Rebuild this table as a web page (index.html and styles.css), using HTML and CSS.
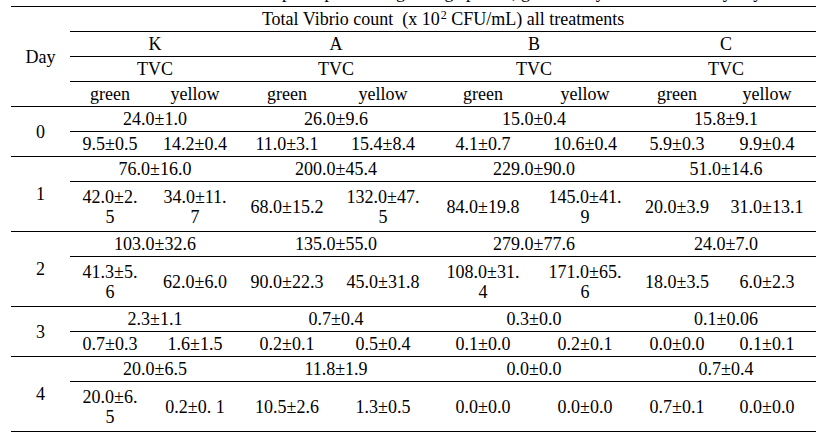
FILE: index.html
```html
<!DOCTYPE html>
<html lang="en">
<head>
<meta charset="utf-8">
<title>Total Vibrio count</title>
<link rel="stylesheet" href="styles.css">
</head>
<body>
<div class="caption"><p>Table 3. Vibrio count of shrimp samples during storage period, green and yellow colonies by day</p></div>
<table class="vt">
  <colgroup>
    <col class="c-day">
    <col class="c-kg"><col class="c-ky">
    <col class="c-ag"><col class="c-ay">
    <col class="c-bg"><col class="c-by">
    <col class="c-cg"><col class="c-cy">
  </colgroup>
  <thead>
    <tr>
      <th rowspan="4">Day</th>
      <th colspan="8">Total Vibrio count&nbsp; (x 10<sup>2</sup> CFU/mL) all treatments</th>
    </tr>
    <tr><th colspan="2">K</th><th colspan="2">A</th><th colspan="2">B</th><th colspan="2">C</th></tr>
    <tr><th colspan="2">TVC</th><th colspan="2">TVC</th><th colspan="2">TVC</th><th colspan="2">TVC</th></tr>
    <tr><th>green</th><th>yellow</th><th>green</th><th>yellow</th><th>green</th><th>yellow</th><th>green</th><th>yellow</th></tr>
  </thead>
  <tbody>
    <tr><td rowspan="2">0</td><td colspan="2">24.0±1.0</td><td colspan="2">26.0±9.6</td><td colspan="2">15.0±0.4</td><td colspan="2">15.8±9.1</td></tr>
    <tr><td>9.5±0.5</td><td>14.2±0.4</td><td>11.0±3.1</td><td>15.4±8.4</td><td>4.1±0.7</td><td>10.6±0.4</td><td>5.9±0.3</td><td>9.9±0.4</td></tr>
  </tbody>
  <tbody>
    <tr><td rowspan="2">1</td><td colspan="2">76.0±16.0</td><td colspan="2">200.0±45.4</td><td colspan="2">229.0±90.0</td><td colspan="2">51.0±14.6</td></tr>
    <tr class="tall"><td>42.0±2.<br>5</td><td>34.0±11.<br>7</td><td>68.0±15.2</td><td>132.0±47.<br>5</td><td>84.0±19.8</td><td>145.0±41.<br>9</td><td>20.0±3.9</td><td>31.0±13.1</td></tr>
  </tbody>
  <tbody>
    <tr><td rowspan="2">2</td><td colspan="2">103.0±32.6</td><td colspan="2">135.0±55.0</td><td colspan="2">279.0±77.6</td><td colspan="2">24.0±7.0</td></tr>
    <tr class="tall"><td>41.3±5.<br>6</td><td>62.0±6.0</td><td>90.0±22.3</td><td>45.0±31.8</td><td>108.0±31.<br>4</td><td>171.0±65.<br>6</td><td>18.0±3.5</td><td>6.0±2.3</td></tr>
  </tbody>
  <tbody>
    <tr><td rowspan="2">3</td><td colspan="2">2.3±1.1</td><td colspan="2">0.7±0.4</td><td colspan="2">0.3±0.0</td><td colspan="2">0.1±0.06</td></tr>
    <tr><td>0.7±0.3</td><td>1.6±1.5</td><td>0.2±0.1</td><td>0.5±0.4</td><td>0.1±0.0</td><td>0.2±0.1</td><td>0.0±0.0</td><td>0.1±0.1</td></tr>
  </tbody>
  <tbody>
    <tr><td rowspan="2">4</td><td colspan="2">20.0±6.5</td><td colspan="2">11.8±1.9</td><td colspan="2">0.0±0.0</td><td colspan="2">0.7±0.4</td></tr>
    <tr class="tall"><td>20.0±6.<br>5</td><td>0.2±0. 1</td><td>10.5±2.6</td><td>1.3±0.5</td><td>0.0±0.0</td><td>0.0±0.0</td><td>0.7±0.1</td><td>0.0±0.0</td></tr>
  </tbody>
</table>
</body>
</html>
```

FILE: styles.css
```css
html, body {
  margin: 0;
  padding: 0;
  background: #ffffff;
}

body {
  font-family: "Liberation Serif", "Times New Roman", serif;
  font-size: 18px;
  color: #000000;
}

.caption {
  height: 6px;
  overflow: hidden;
  margin-left: 11px;
  width: 805px;
}

.caption p {
  margin: -18px 0 0 0;
  line-height: 20px;
  text-align: center;
  white-space: nowrap;
}

.vt {
  margin-left: 11px;
  width: 805px;
  table-layout: fixed;
  border-collapse: collapse;
  border-top: 1px solid #000000;
}

.c-day { width: 59px; }
.c-kg { width: 80px; }
.c-ky { width: 90px; }
.c-ag { width: 94px; }
.c-ay { width: 98px; }
.c-bg { width: 102px; }
.c-by { width: 102px; }
.c-cg { width: 82px; }
.c-cy { width: 98px; }

.vt th,
.vt td {
  font-weight: normal;
  text-align: center;
  vertical-align: middle;
  padding: 0;
  height: 24px;
  line-height: 20px;
  border-bottom: 1px solid #000000;
  white-space: nowrap;
}

.vt tr.tall td {
  height: 49px;
}

.vt sup {
  font-size: 12px;
  line-height: 0;
  vertical-align: 6px;
  margin-left: 1px;
}
```
